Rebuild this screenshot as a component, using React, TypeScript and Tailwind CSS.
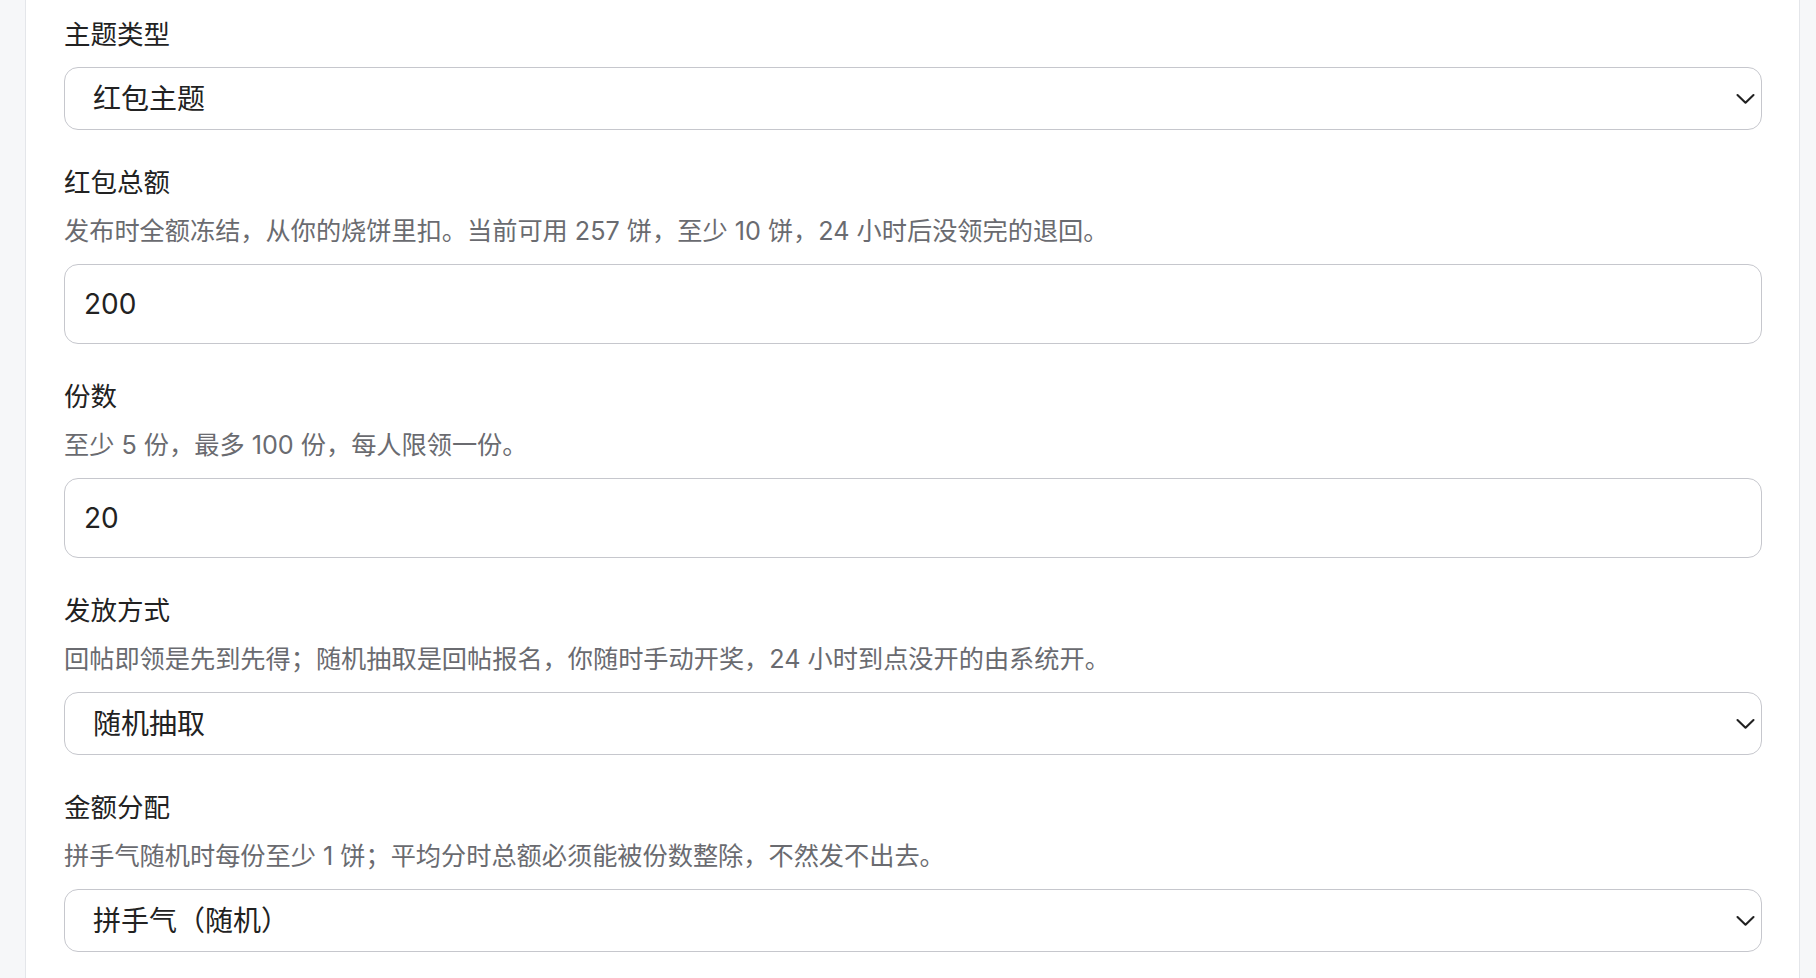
import { ReactNode } from 'react';

const FONT = { fontFamily: 'Inter, "Noto Sans CJK SC", sans-serif' };

const Chevron = () => (
    <svg
        className="pointer-events-none absolute right-[7px] top-1/2 -translate-y-1/2"
        width="19"
        height="11"
        viewBox="0 0 19 11"
        fill="none">
        <path d="M1.5 1.5 L9.5 9.2 L17.5 1.5" stroke="#222" strokeWidth="2.1" strokeLinecap="round" strokeLinejoin="round" />
    </svg>
);

const SelectBox = ({ value, options }: { value: string; options: string[] }) => (
    <div className="relative">
        <select
            defaultValue={value}
            style={FONT}
            className="block h-[63px] w-full appearance-none rounded-[14px] border-[1.5px] border-[#c6c7cd] bg-white pl-[28px] pr-[40px] text-[28px] text-[#222] outline-none">
            {options.map((o) => (
                <option key={o}>{o}</option>
            ))}
        </select>
        <Chevron />
    </div>
);

const TextBox = ({ value }: { value: string }) => (
    <input
        defaultValue={value}
        style={FONT}
        className="block h-[80px] w-full rounded-[14px] border-[1.5px] border-[#c6c7cd] bg-white pl-[19px] text-[28px] text-[#222] outline-none"
    />
);

const Field = ({
    label,
    hint,
    first,
    children
}: {
    label: string;
    hint?: string;
    first?: boolean;
    children: ReactNode;
}) => (
    <div className="mb-[34px]">
        <div className={`text-[26.5px] leading-[36px] text-[#222] ${first ? 'mb-[15px]' : 'mb-[13px]'}`}>{label}</div>
        {hint && <p className="mb-[15px] text-[25.2px] leading-[36px] text-[#6a6b70]">{hint}</p>}
        {children}
    </div>
);

export default function App() {
    return (
        <div style={FONT} className="flex h-[978px] overflow-hidden bg-[#f6f7f9]">
            <div className="ml-[25px] w-[1775px] border-x border-[#e4e6ea] bg-white pl-[38px] pr-[37px] pt-[16px]">
                <Field label="主题类型" first>
                    <SelectBox value="红包主题" options={['红包主题', '普通主题']} />
                </Field>
                <Field
                    label="红包总额"
                    hint="发布时全额冻结，从你的烧饼里扣。当前可用 257 饼，至少 10 饼，24 小时后没领完的退回。">
                    <TextBox value="200" />
                </Field>
                <Field label="份数" hint="至少 5 份，最多 100 份，每人限领一份。">
                    <TextBox value="20" />
                </Field>
                <Field
                    label="发放方式"
                    hint="回帖即领是先到先得；随机抽取是回帖报名，你随时手动开奖，24 小时到点没开的由系统开。">
                    <SelectBox value="随机抽取" options={['回帖即领', '随机抽取']} />
                </Field>
                <Field label="金额分配" hint="拼手气随机时每份至少 1 饼；平均分时总额必须能被份数整除，不然发不出去。">
                    <SelectBox value="拼手气（随机）" options={['拼手气（随机）', '平均分']} />
                </Field>
            </div>
        </div>
    );
}
